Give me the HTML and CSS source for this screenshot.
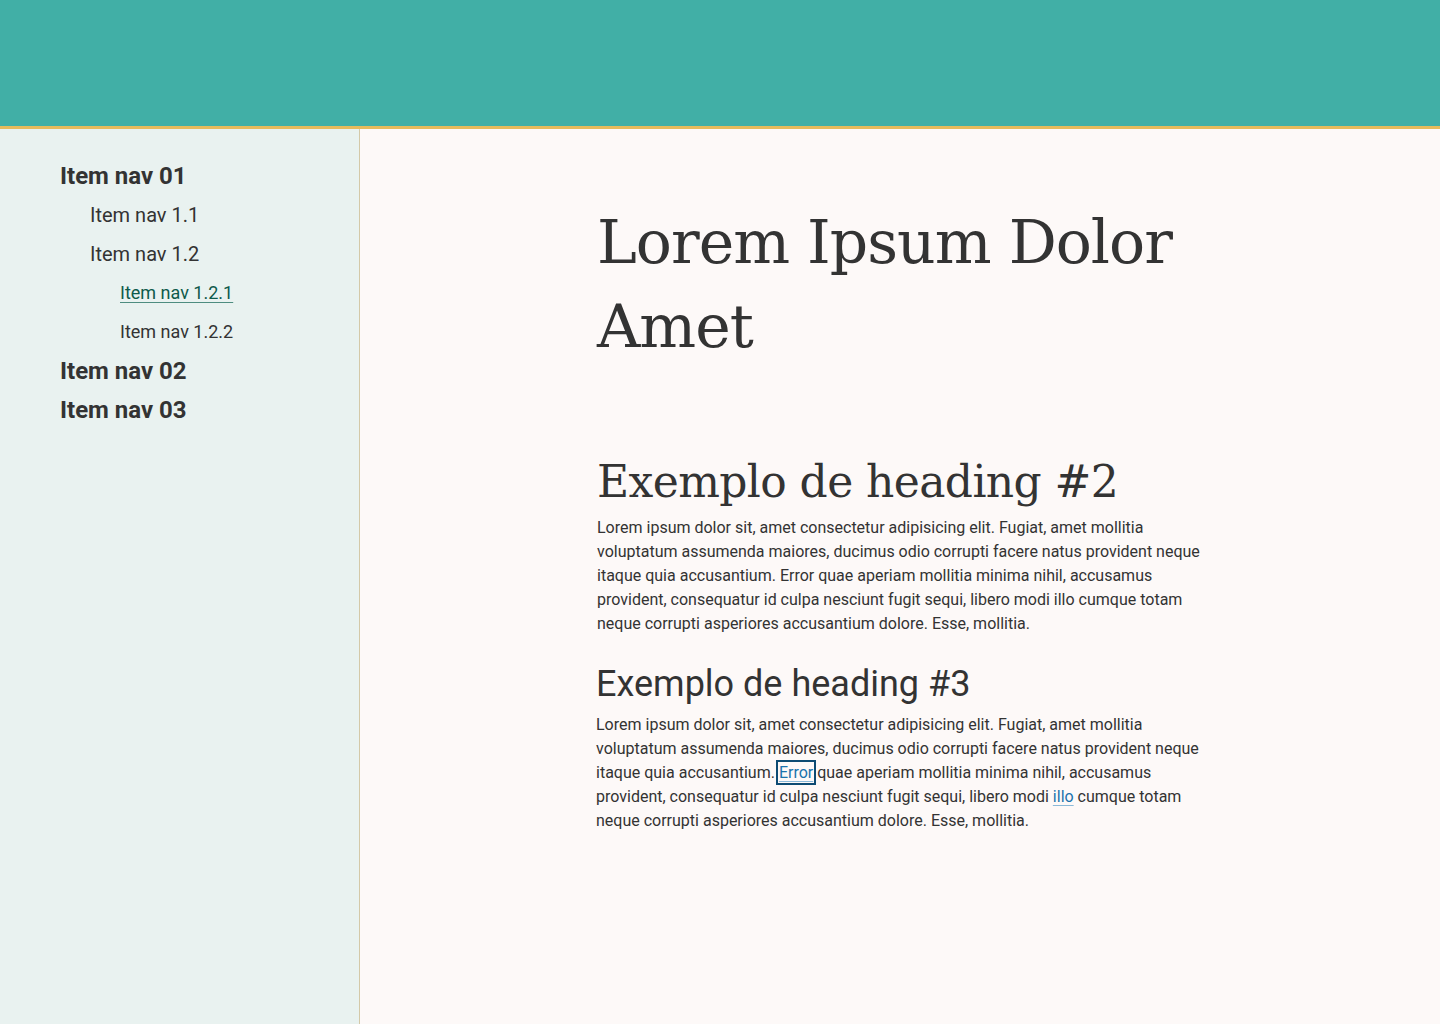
FILE: index.html
```html
<!DOCTYPE html>
<html lang="pt">
<head>
<meta charset="utf-8">
<title>Lorem Ipsum Dolor Amet</title>
<link rel="stylesheet" href="styles.css">
</head>
<body>
<header class="topbar"></header>
<div class="layout">
  <nav class="sidebar">
    <ul class="nav nav-l1">
      <li><a class="nav-link l1" href="#">Item nav 01</a>
        <ul class="nav nav-l2">
          <li><a class="nav-link l2" href="#">Item nav 1.1</a></li>
          <li><a class="nav-link l2" href="#">Item nav 1.2</a>
            <ul class="nav nav-l3">
              <li><a class="nav-link l3 active" href="#">Item nav 1.2.1</a></li>
              <li><a class="nav-link l3" href="#">Item nav 1.2.2</a></li>
            </ul>
          </li>
        </ul>
      </li>
      <li><a class="nav-link l1" href="#">Item nav 02</a></li>
      <li><a class="nav-link l1" href="#">Item nav 03</a></li>
    </ul>
  </nav>
  <main class="main">
    <article class="content">
      <h1 class="title">Lorem Ipsum Dolor Amet</h1>
      <section class="section">
        <h2 class="h2">Exemplo de heading #2</h2>
        <p class="para">Lorem ipsum dolor sit, amet consectetur adipisicing elit. Fugiat, amet mollitia voluptatum assumenda maiores, ducimus odio corrupti facere natus provident neque itaque quia accusantium. Error quae aperiam mollitia minima nihil, accusamus provident, consequatur id culpa nesciunt fugit sequi, libero modi illo cumque totam neque corrupti asperiores accusantium dolore. Esse, mollitia.</p>
      </section>
      <section class="section section-h3">
        <h3 class="h3">Exemplo de heading #3</h3>
        <p class="para">Lorem ipsum dolor sit, amet consectetur adipisicing elit. Fugiat, amet mollitia voluptatum assumenda maiores, ducimus odio corrupti facere natus provident neque itaque quia accusantium. <a class="link focused" href="#">Error</a> quae aperiam mollitia minima nihil, accusamus provident, consequatur id culpa nesciunt fugit sequi, libero modi <a class="link" href="#">illo</a> cumque totam neque corrupti asperiores accusantium dolore. Esse, mollitia.</p>
      </section>
    </article>
  </main>
</div>
</body>
</html>
```

FILE: styles.css
```css
* { box-sizing: border-box; }

html, body {
  margin: 0;
  padding: 0;
  height: 100%;
}

body {
  font-family: Roboto, "Liberation Sans", sans-serif;
  color: #333333;
  background: #fdf9f8;
}

.topbar {
  height: 129px;
  background: #41afa6;
  border-bottom: 3px solid #e6bb5c;
}

.layout {
  display: flex;
  min-height: calc(100vh - 129px);
}

.sidebar {
  width: 360px;
  flex: 0 0 360px;
  background: #e9f2f0;
  border-right: 1px solid #d4c9a8;
  padding: 32px 0 0 60px;
}

.nav {
  list-style: none;
  margin: 0;
  padding: 0;
}

.nav-l2 { padding-left: 30px; }
.nav-l3 { padding-left: 30px; }

.nav-link {
  display: block;
  height: 39px;
  line-height: 30px;
  color: #333333;
  text-decoration: none;
}

.nav-link.l1 {
  font-size: 24px;
  font-weight: 700;
}

.nav-link.l2 {
  font-size: 20px;
}

.nav-link.l3 {
  font-size: 18px;
}

.nav-link.active {
  color: #0e5a4b;
  text-decoration: underline;
  text-decoration-color: #4e8d80;
  text-underline-offset: 3px;
}

.main {
  flex: 1;
  background: #fdf9f8;
}

.content {
  width: 606px;
  margin: 0 auto;
  padding-top: 71px;
}

.title {
  font-family: "DejaVu Serif", "Liberation Serif", serif;
  font-weight: 400;
  font-size: 60px;
  line-height: 84px;
  letter-spacing: -1px;
  margin: 0 0 86px;
}

.h2 {
  font-family: "DejaVu Serif", "Liberation Serif", serif;
  font-weight: 400;
  font-size: 44px;
  line-height: 56px;
  letter-spacing: -0.6px;
  margin: 0 0 6px;
}

.para {
  font-size: 16px;
  line-height: 24px;
  margin: 0;
}

.section-h3 {
  margin-top: 24px;
  margin-left: -1px;
}

.h3 {
  font-family: Roboto, "Liberation Sans", sans-serif;
  font-weight: 400;
  font-size: 36px;
  line-height: 48px;
  margin: 0 0 5px;
}

.link {
  color: #1b73ad;
  text-decoration: underline;
  text-decoration-color: #8ab9d8;
  text-underline-offset: 3px;
}

.link.focused {
  outline: 2px solid #0d4b73;
  outline-offset: 1px;
}
```
